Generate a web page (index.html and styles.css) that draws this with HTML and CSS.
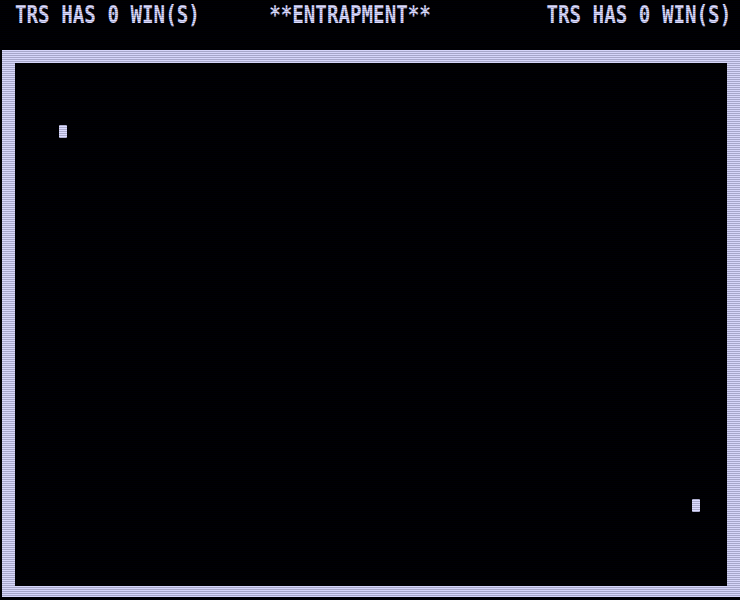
FILE: index.html
```html
<!DOCTYPE html>
<html lang="en">
<head>
    <meta charset="UTF-8">
    <meta name="viewport" content="width=device-width, initial-scale=1.0">
    <title>**ENTRAPMENT**</title>
    <link rel="stylesheet" href="styles.css">
</head>
<body>
    <div class="screen">
        <div class="status">
            <div class="status-line">
                <span class="score">TRS HAS 0 WIN(S)</span>
                <span class="title">**ENTRAPMENT**</span>
                <span class="score right">TRS HAS 0 WIN(S)</span>
            </div>
        </div>
        <div class="board">
            <!-- player markers, placed by board coordinates -->
            <div class="piece" style="left: 44px; top: 62px;"></div>
            <div class="piece" style="left: 677px; top: 436px;"></div>
        </div>
    </div>
</body>
</html>
```

FILE: styles.css
```css
html, body {
    margin: 0;
    padding: 0;
    background-color: #000;
}
body {
    width: 740px;
    height: 600px;
    overflow: hidden;
    position: relative;
}
/* crt scanlines over the whole screen */
body::after {
    content: "";
    position: absolute;
    inset: 0;
    pointer-events: none;
    background: repeating-linear-gradient(
        to bottom,
        rgba(0, 0, 20, 0) 0,
        rgba(0, 0, 20, 0) 1px,
        rgba(0, 0, 30, 0.22) 1px,
        rgba(0, 0, 30, 0.22) 2px
    );
}
.screen {
    color: #dcdcff;
}
.status {
    height: 49px;
    padding-top: 1px;
}
/* tall narrow 64-column characters */
.status-line {
    display: flex;
    height: 22px;
    padding-left: 15px;
    font-family: "DejaVu Sans Mono", "Liberation Mono", monospace;
    font-weight: bold;
    font-size: 19.2px;
    line-height: 22px;
    white-space: pre;
    transform: scaleY(1.3);
    transform-origin: 50% 0;
}
.title {
    margin-left: 6ch;
}
.right {
    margin-left: 10ch;
}
.board {
    position: relative;
    margin-left: 2px;
    width: 712px;
    height: 523px;
    border: 13px solid #d6d6fa;
    border-bottom-width: 11px;
    background-color: #000;
}
.piece {
    position: absolute;
    width: 8px;
    height: 13px;
    background-color: #dcdcff;
    border-radius: 1px;
}
```
